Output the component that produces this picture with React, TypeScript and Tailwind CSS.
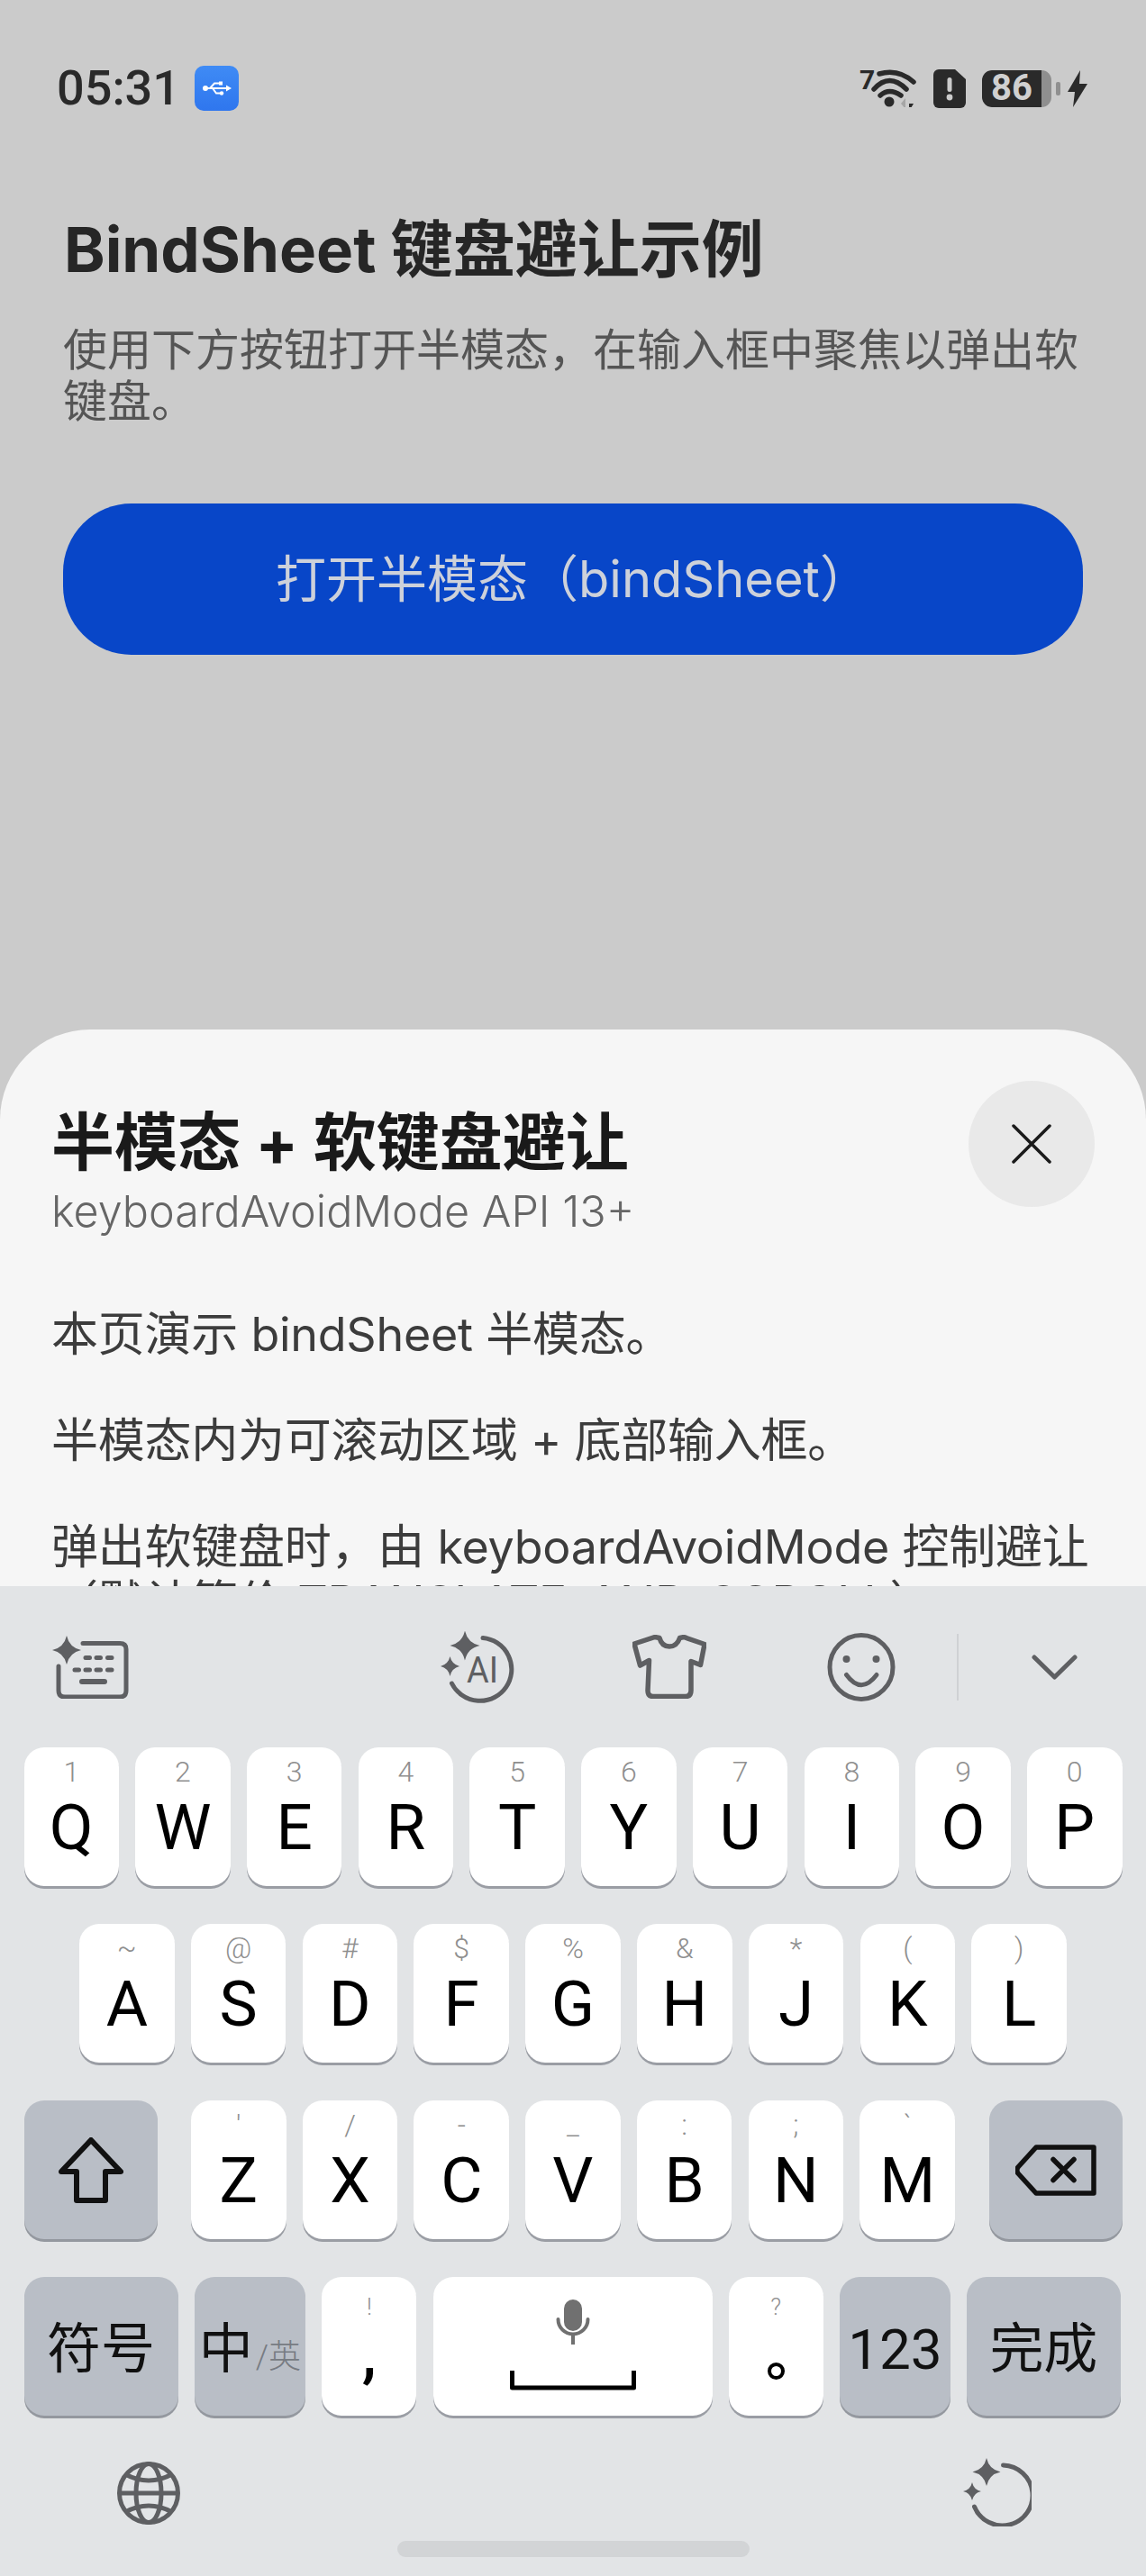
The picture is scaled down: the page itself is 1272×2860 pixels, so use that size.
import type { ReactNode } from "react";

// ─── Status bar ──────────────────────────────────────────────────────────────

function UsbBadge() {
  return (
    <div className="ml-[16px] flex h-[50px] w-[49px] items-center justify-center rounded-[10px] bg-gradient-to-b from-[#3f8bf5] to-[#2f76ee]">
      <svg width="32" height="18" viewBox="0 0 32 18" fill="none">
        <path d="M3 9H27" stroke="#fff" strokeWidth="2" />
        <path d="M26 5.5L32 9L26 12.5Z" fill="#fff" />
        <path d="M8 9L13 3.5H19" stroke="#fff" strokeWidth="2" />
        <path d="M11 9L15 14.5H20" stroke="#fff" strokeWidth="2" />
        <circle cx="3" cy="9" r="3" fill="#fff" />
        <rect x="18" y="1.5" width="4" height="4" fill="#fff" />
        <circle cx="21" cy="14.5" r="2.2" fill="#fff" />
      </svg>
    </div>
  );
}

function StatusIcons() {
  return (
    <div className="flex items-center">
      <span className="mb-[18px] w-[14px] text-[30px] leading-[24px] font-bold text-[#2a2a2a]">7</span>
      <svg width="50" height="42" viewBox="0 0 50 42" fill="none" className="-ml-[1px]">
        <g stroke="#2a2a2a" strokeWidth="5.5" strokeLinecap="round">
          <path d="M9 5Q30 -1 47 14" />
          <path d="M3 22Q20 3 39 22" />
          <path d="M10 29Q20 20 33 29" />
        </g>
        <circle cx="20" cy="36" r="5.5" fill="#2a2a2a" />
        <path d="M33 38L38 32V44Z" fill="#a5a5a5" />
        <path d="M42 33V38H47L43.5 44L42 42Z" fill="#2a2a2a" />
      </svg>
      <svg width="36" height="43" viewBox="0 0 36 43" className="ml-[19px]">
        <path d="M6 0H24L36 11V37A6 6 0 0 1 30 43H6A6 6 0 0 1 0 37V6A6 6 0 0 1 6 0Z" fill="#2a2a2a" />
        <rect x="15.5" y="9" width="5" height="16" rx="2.5" fill="#cbcbcb" />
        <circle cx="18" cy="31" r="3.4" fill="#cbcbcb" />
      </svg>
      <div className="ml-[18px] flex h-[41px] w-[77px] overflow-hidden rounded-[11px] bg-[#8f8f8f]">
        <div className="flex w-[66px] items-center justify-center rounded-l-[11px] bg-[#2a2a2a] text-[40px] leading-none font-bold text-[#d0d0d0]">
          86
        </div>
      </div>
      <div className="ml-[5px] h-[15px] w-[5px] rounded-[2px] bg-[#8f8f8f]" />
      <svg width="22" height="41" viewBox="0 0 22 41" className="ml-[8px]">
        <path d="M14 0L0 24H8L6 41L22 15H13Z" fill="#2a2a2a" />
      </svg>
    </div>
  );
}

// ─── Keyboard icons ──────────────────────────────────────────────────────────

function Sparkle({ cx, cy, r }: { cx: number; cy: number; r: number }) {
  const k = r * 0.18;
  return (
    <path
      d={`M${cx} ${cy - r}Q${cx + k} ${cy - k} ${cx + r} ${cy}Q${cx + k} ${cy + k} ${cx} ${cy + r}Q${cx - k} ${cy + k} ${cx - r} ${cy}Q${cx - k} ${cy - k} ${cx} ${cy - r}Z`}
      fill="#5e5f62"
      stroke="none"
    />
  );
}

function SmartKeyboardIcon() {
  return (
    <svg width="86" height="70" viewBox="0 0 86 70" fill="none" stroke="#5e5f62" strokeWidth="5" strokeLinecap="round">
      <Sparkle cx={16} cy={16} r={16} />
      <path d="M34 8.5H75Q82 8.5 82 15V61Q82 68 75 68H14Q7 68 7 61V34" />
      <path d="M37 24.5H41.5M49 24.5H53.5M61.5 24.5H66M25 38H29.5M37 38H41.5M49 38H53.5M61.5 38H66" />
      <path d="M33 51H58" strokeWidth="6" />
    </svg>
  );
}

function AiIcon() {
  return (
    <svg width="82" height="80" viewBox="0 0 82 80" fill="none">
      <Sparkle cx={27} cy={16} r={16.5} />
      <Sparkle cx={10.5} cy={39} r={11} />
      <path d="M47 7.5A35 35 0 1 1 12.5 58" stroke="#5e5f62" strokeWidth="5" strokeLinecap="round" />
      <text x="29" y="57" fill="#5e5f62" fontSize="40" fontFamily="Roboto, sans-serif" textLength="35" lengthAdjust="spacingAndGlyphs">
        AI
      </text>
    </svg>
  );
}

function ShirtIcon() {
  return (
    <svg width="82" height="71" viewBox="0 0 82 71" fill="none" stroke="#5e5f62" strokeWidth="5.5" strokeLinejoin="round">
      <path d="M2 10L25 2.5L30 3.5C32 11 37 13 41 13C45 13 50 11 52.5 3.5L57 2.5L80 10.5L75.5 33.5L65 29.5V62Q65 68.5 59 68.5H23Q17 68.5 17 62L18.5 28.5L8.5 34Z" />
    </svg>
  );
}

function SmileIcon() {
  return (
    <svg width="76" height="76" viewBox="0 0 76 76" fill="none" stroke="#5e5f62" strokeWidth="5" strokeLinecap="round">
      <ellipse cx="38" cy="38" rx="35" ry="35.5" />
      <circle cx="21.5" cy="29" r="4" fill="#5e5f62" stroke="none" />
      <circle cx="54.5" cy="29" r="4" fill="#5e5f62" stroke="none" />
      <path d="M21.5 46.5Q38 69 55 46.5" />
    </svg>
  );
}

function ChevronIcon() {
  return (
    <svg width="51" height="28" viewBox="0 0 51 28" fill="none" stroke="#5e5f62" strokeWidth="5" strokeLinecap="round" strokeLinejoin="round">
      <path d="M3 3L25.5 25L48 3" />
    </svg>
  );
}

function ShiftIcon() {
  return (
    <svg width="72" height="73" viewBox="0 0 72 73" fill="none" stroke="#111" strokeWidth="6" strokeLinejoin="round">
      <path d="M36 3L69 38H52V70H20V38H3Z" />
    </svg>
  );
}

function DeleteIcon() {
  return (
    <svg width="90" height="57" viewBox="0 0 90 57" fill="none" stroke="#111" strokeWidth="5.5" strokeLinecap="round" strokeLinejoin="round">
      <path d="M23 3H87V54H23L3 32Q0.5 28.5 3 25Z" />
      <path d="M42 16.5L65 39.5M65 16.5L42 39.5" />
    </svg>
  );
}

function MicSpace() {
  return (
    <div className="flex flex-col items-center">
      <svg width="38" height="50" viewBox="0 0 38 50" fill="none" className="mt-[25px]">
        <rect x="9" y="0" width="20" height="35" rx="10" fill="#707070" />
        <path d="M2.5 22A16.5 16.5 0 0 0 35.5 22M19 39V50" stroke="#707070" strokeWidth="4" strokeLinecap="round" />
      </svg>
      <svg width="140" height="22" viewBox="0 0 140 22" fill="none" className="mt-[29px]">
        <path d="M2.5 0V19H137.5V0" stroke="#000" strokeWidth="5" strokeLinejoin="round" />
      </svg>
    </div>
  );
}

function GlobeIcon() {
  return (
    <svg width="70" height="70" viewBox="0 0 70 70" fill="none" stroke="#5e5f62" strokeWidth="5">
      <ellipse cx="35" cy="35" rx="32.5" ry="32.5" />
      <ellipse cx="35" cy="35" rx="14" ry="32.5" />
      <path d="M2.5 35H67.5M9 14Q35 28 61 14M9 56Q35 42 61 56" />
    </svg>
  );
}

function HistoryIcon() {
  return (
    <svg width="76" height="76" viewBox="0 0 76 76" fill="none">
      <Sparkle cx={26} cy={15.5} r={15.5} />
      <Sparkle cx={10} cy={37} r={10} />
      <path d="M44.5 8A33.5 33.5 0 1 1 12.5 54" stroke="#5e5f62" strokeWidth="5" strokeLinecap="round" />
    </svg>
  );
}

// ─── Keys ────────────────────────────────────────────────────────────────────

interface KeyProps {
  width?: string;
  dark?: boolean;
  children: ReactNode;
}

function Key({ width = "flex-1", dark = false, children }: KeyProps) {
  return (
    <div
      className={`${width} h-[154px] shrink-0 rounded-[22px] ${
        dark ? "bg-[#b9bec6] shadow-[0_3px_0_#94989f]" : "bg-white shadow-[0_3px_0_#9a9da4]"
      }`}
    >
      {children}
    </div>
  );
}

function LetterKey({ letter, sup, width }: { letter: string; sup: string; width?: string }) {
  return (
    <Key width={width}>
      <div className="text-center">
        <div className="h-[54px] text-[32px] leading-[54px] font-light text-[#8f8f8f]">{sup}</div>
        <div className="h-[70px] text-[71px] leading-[70px] text-black">{letter}</div>
      </div>
    </Key>
  );
}

function LabelKey({ width, children }: { width: string; children: ReactNode }) {
  return (
    <Key width={width} dark>
      <div className="pt-[51px] text-center text-[60px] leading-[60px] text-[#111]">{children}</div>
    </Key>
  );
}

const row1 = [
  ["Q", "1"],
  ["W", "2"],
  ["E", "3"],
  ["R", "4"],
  ["T", "5"],
  ["Y", "6"],
  ["U", "7"],
  ["I", "8"],
  ["O", "9"],
  ["P", "0"],
];

const row2 = [
  ["A", "~"],
  ["S", "@"],
  ["D", "#"],
  ["F", "$"],
  ["G", "%"],
  ["H", "&"],
  ["J", "*"],
  ["K", "("],
  ["L", ")"],
];

const row3 = [
  ["Z", "'"],
  ["X", "/"],
  ["C", "-"],
  ["V", "_"],
  ["B", ":"],
  ["N", ";"],
  ["M", "`"],
];

function Keyboard() {
  return (
    <div className="flex h-[1099px] flex-col bg-[#e2e4e6] font-['Roboto','Noto_Sans_CJK_SC',sans-serif]">
      <div className="flex h-[179px] items-center pl-[58px]">
        <SmartKeyboardIcon />
        <div className="ml-[345px]">
          <AiIcon />
        </div>
        <div className="ml-[131px]">
          <ShirtIcon />
        </div>
        <div className="ml-[134px]">
          <SmileIcon />
        </div>
        <div className="ml-[68px] h-[74px] w-[2px] bg-[#cfd1d4]" />
        <div className="ml-[81px]">
          <ChevronIcon />
        </div>
      </div>

      <div className="flex gap-[18.2px] px-[26.5px]">
        {row1.map(([letter, sup]) => (
          <LetterKey key={letter} letter={letter} sup={sup} />
        ))}
      </div>

      <div className="mt-[42px] flex gap-[18.2px] px-[88px]">
        {row2.map(([letter, sup]) => (
          <LetterKey key={letter} letter={letter} sup={sup} />
        ))}
      </div>

      <div className="mt-[42px] flex justify-between px-[26.5px]">
        <Key width="w-[148px]" dark>
          <div className="flex justify-center pt-[41px]">
            <ShiftIcon />
          </div>
        </Key>
        <div className="flex w-[848px] gap-[18.2px]">
          {row3.map(([letter, sup]) => (
            <LetterKey key={letter} letter={letter} sup={sup} />
          ))}
        </div>
        <Key width="w-[148px]" dark>
          <div className="flex justify-center pt-[49px]">
            <DeleteIcon />
          </div>
        </Key>
      </div>

      <div className="mt-[42px] flex gap-[18.2px] pl-[26.5px]">
        <LabelKey width="w-[171px]">符号</LabelKey>
        <Key width="w-[123.5px]" dark>
          <div className="flex items-baseline justify-center gap-[3px] pt-[51px] text-[#111]">
            <span className="text-[60px] leading-[60px]">中</span>
            <span className="text-[36px] leading-[36px] font-light text-[#777b82]">/英</span>
          </div>
        </Key>
        <Key width="w-[105px]">
          <div className="text-center">
            <div className="h-[60px] pt-[6px] text-[26px] leading-[54px] font-light text-[#8f8f8f]">!</div>
            <div className="h-[64px] text-[72px] leading-[50px] font-medium text-black">,</div>
          </div>
        </Key>
        <Key width="w-[310px]">
          <MicSpace />
        </Key>
        <Key width="w-[105px]">
          <div className="flex flex-col items-center">
            <div className="h-[60px] pt-[6px] text-[26px] leading-[54px] font-light text-[#8f8f8f]">?</div>
            <div className="mt-[35px] h-[19px] w-[19px] rounded-full border-[4px] border-black" />
          </div>
        </Key>
        <Key width="w-[123px]" dark>
          <div className="pt-[51px] text-center text-[62px] leading-[60px] text-[#111]">123</div>
        </Key>
        <LabelKey width="w-[170.5px]">完成</LabelKey>
      </div>

      <div className="mt-[51px] flex justify-between pr-[127px] pl-[130px]">
        <GlobeIcon />
        <div className="-mt-[4px]">
          <HistoryIcon />
        </div>
      </div>
      <div className="mt-[16px] flex justify-center">
        <div className="h-[18px] w-[391px] rounded-full bg-[#d2d4d6]" />
      </div>
    </div>
  );
}

// ─── Page ────────────────────────────────────────────────────────────────────

export default function App() {
  return (
    <div className="h-[2860px] w-[1272px] overflow-hidden bg-[#cbcbcb] font-['Inter','Noto_Sans_CJK_SC',sans-serif]">
      <div className="h-[1143px]">
        <div className="flex items-center justify-between pt-[73px] pr-[65px] pl-[63px] font-['Roboto','Noto_Sans_CJK_SC',sans-serif]">
          <div className="flex items-center">
            <span className="text-[54px] leading-[50px] font-medium text-[#2a2a2a]">05:31</span>
            <UsbBadge />
          </div>
          <StatusIcons />
        </div>

        <div className="px-[70px]">
          <h1 className="mt-[114px] pl-[1px] text-[69px] leading-[80px] font-bold text-[#262626]">
            BindSheet 键盘避让示例
          </h1>
          <p className="mt-[43px] text-[49px] leading-[57px] text-[#555555]">
            使用下方按钮打开半模态，在输入框中聚焦以弹出软键盘。
          </p>
          <button className="mt-[85px] flex h-[168px] w-full items-center justify-center rounded-[76px] bg-[#0846c8] text-[56px] text-[#cdd1da]">
            打开半模态（bindSheet）
          </button>
        </div>
      </div>

      <div className="h-[618px] overflow-hidden rounded-t-[100px] bg-[#f6f6f6]">
        <div className="flex items-start justify-between pr-[57px] pl-[57px]">
          <div className="pt-[88px]">
            <h2 className="text-[70px] leading-[76px] font-bold text-[#1a1a1a]">半模态 + 软键盘避让</h2>
            <div className="mt-[8px] text-[48.5px] leading-[60px] font-light text-[#666666]">
              keyboardAvoidMode API 13+
            </div>
          </div>
          <button className="mt-[57px] flex h-[140px] w-[140px] items-center justify-center rounded-full bg-[#e9e9e9]">
            <svg width="44" height="44" viewBox="0 0 44 44" fill="none" stroke="#1a1a1a" strokeWidth="3.5" strokeLinecap="round">
              <path d="M2 2L42 42M42 2L2 42" />
            </svg>
          </button>
        </div>
        <div className="mt-[76px] pl-[57px] text-[52px] leading-[62px] tracking-[-0.25px] whitespace-nowrap text-[#3c3c3c]">
          <p>本页演示 bindSheet 半模态。</p>
          <p className="mt-[56px]">半模态内为可滚动区域 + 底部输入框。</p>
          <p className="mt-[56px]">
            弹出软键盘时，由 keyboardAvoidMode 控制避让
            <br />
            （默认等价 TRANSLATE_AND_SCROLL）
          </p>
        </div>
      </div>

      <Keyboard />
    </div>
  );
}
